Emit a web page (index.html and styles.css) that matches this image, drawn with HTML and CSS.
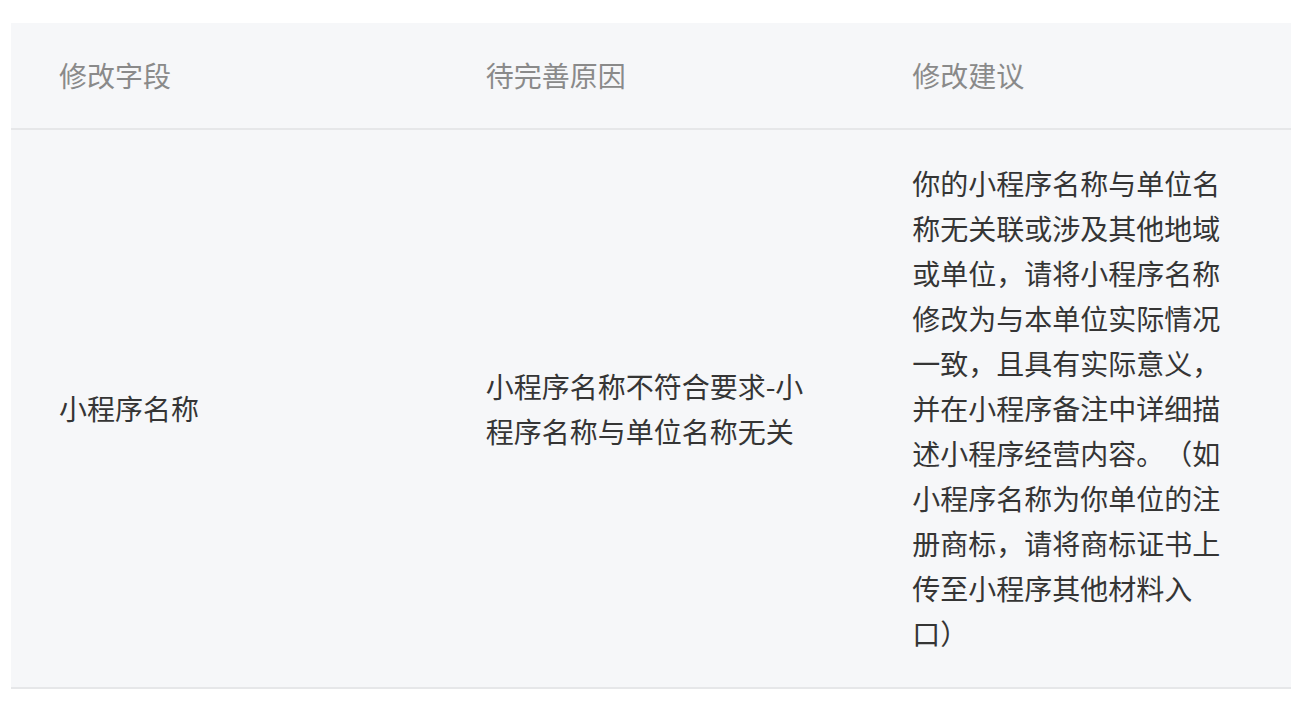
FILE: index.html
```html
<!DOCTYPE html>
<html lang="zh">
<head>
<meta charset="utf-8">
<link rel="stylesheet" href="styles.css">
</head>
<body>
<div class="table">
  <div class="row head">
    <div class="cell">修改字段</div>
    <div class="cell">待完善原因</div>
    <div class="cell">修改建议</div>
  </div>
  <div class="row body">
    <div class="cell">小程序名称</div>
    <div class="cell">小程序名称不符合要求-小程序名称与单位名称无关</div>
    <div class="cell">你的小程序名称与单位名称无关联或涉及其他地域或单位，请将小程序名称修改为与本单位实际情况一致，且具有实际意义，并在小程序备注中详细描述小程序经营内容。（如小程序名称为你单位的注册商标，请将商标证书上传至小程序其他材料入口）</div>
  </div>
</div>
</body>
</html>
```
FILE: styles.css
```css
html, body {
  margin: 0;
  padding: 0;
  background: #ffffff;
}
body {
  padding: 23px 19px 0 11px;
  font-family: "Noto Sans CJK SC", "Noto Sans", sans-serif;
}
.table {
  width: 1280px;
  background: #f6f7f9;
}
.row {
  display: grid;
  grid-template-columns: repeat(3, 1fr);
  border-bottom: 2px solid #e6e7e9;
}
.cell {
  padding: 30px 48px;
  font-size: 28px;
  line-height: 45px;
  display: flex;
  align-items: center;
  word-break: break-all;
  text-spacing-trim: space-all;
  font-feature-settings: "halt" 0, "chws" 0;
}
.head .cell {
  color: #8a8a8a;
  padding-top: 30px;
  padding-bottom: 30px;
}
.body .cell {
  color: #353535;
  padding-top: 31px;
  padding-bottom: 31px;
}
```
